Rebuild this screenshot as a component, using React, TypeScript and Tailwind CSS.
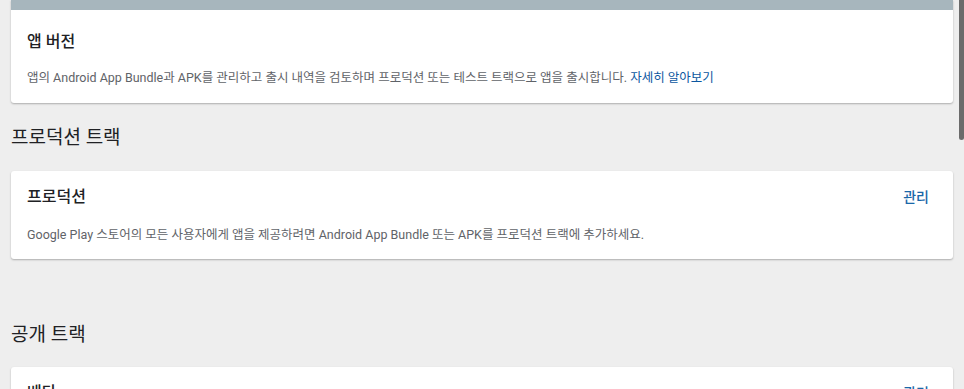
const font = { fontFamily: 'Roboto, "Noto Sans CJK KR", sans-serif' };

type TrackCardProps = {
  title: string;
  description?: React.ReactNode;
  manage?: boolean;
};

function TrackCard({ title, description, manage = true }: TrackCardProps) {
  return (
    <div className="bg-white rounded-[3px] shadow-[0_1px_2px_rgba(0,0,0,0.28)] px-4 pt-[14px] pb-[16px]">
      <div className="flex items-center justify-between">
        <h3 className="text-[16px] leading-6 font-medium text-[#202124]">{title}</h3>
        {manage && (
          <a className="text-[14px] leading-6 font-medium text-[#1a67a8] mr-[8px]" href="#">
            관리
          </a>
        )}
      </div>
      {description && (
        <p className="mt-[18px] text-[12.5px] leading-4 text-[#5f6368]">{description}</p>
      )}
    </div>
  );
}

export default function App() {
  return (
    <div className="relative w-[964px] h-[389px] overflow-hidden bg-[#eeeeee]" style={font}>
      <div className="px-[11px]">
        {/* app version card, scrolled so only the bottom of the banner shows */}
        <div className="bg-white rounded-b-[3px] shadow-[0_1px_2px_rgba(0,0,0,0.28)]">
          <div className="h-[10px] bg-[#a7b6bd]" />
          <div className="px-4 pt-5 pb-[17px]">
            <h3 className="text-[16px] leading-6 font-medium text-[#202124]">앱 버전</h3>
            <p className="mt-[16px] text-[12.5px] leading-4 text-[#5f6368]">
              앱의 Android App Bundle과 APK를 관리하고 출시 내역을 검토하며 프로덕션 또는 테스트 트랙으로 앱을 출시합니다.{" "}
              <a className="text-[#0b57a0]" href="#">
                자세히 알아보기
              </a>
            </p>
          </div>
        </div>

        <h2 className="mt-[21px] mb-[19px] text-[19px] leading-7 text-[#202124]">프로덕션 트랙</h2>
        <TrackCard
          title="프로덕션"
          description="Google Play 스토어의 모든 사용자에게 앱을 제공하려면 Android App Bundle 또는 APK를 프로덕션 트랙에 추가하세요."
        />

        <h2 className="mt-[62px] mb-[18px] text-[19px] leading-7 text-[#202124]">공개 트랙</h2>
        <TrackCard title="베타" description="테스트 사용자에게 앱을 제공하세요." />
      </div>

      {/* scrollbar */}
      <div className="absolute right-0 top-0 h-full w-[6px] bg-[#eeeeee]">
        <div className="ml-[1px] w-[5px] h-[140px] rounded-b-[3px] bg-[#6b6b6b]" />
      </div>
    </div>
  );
}
